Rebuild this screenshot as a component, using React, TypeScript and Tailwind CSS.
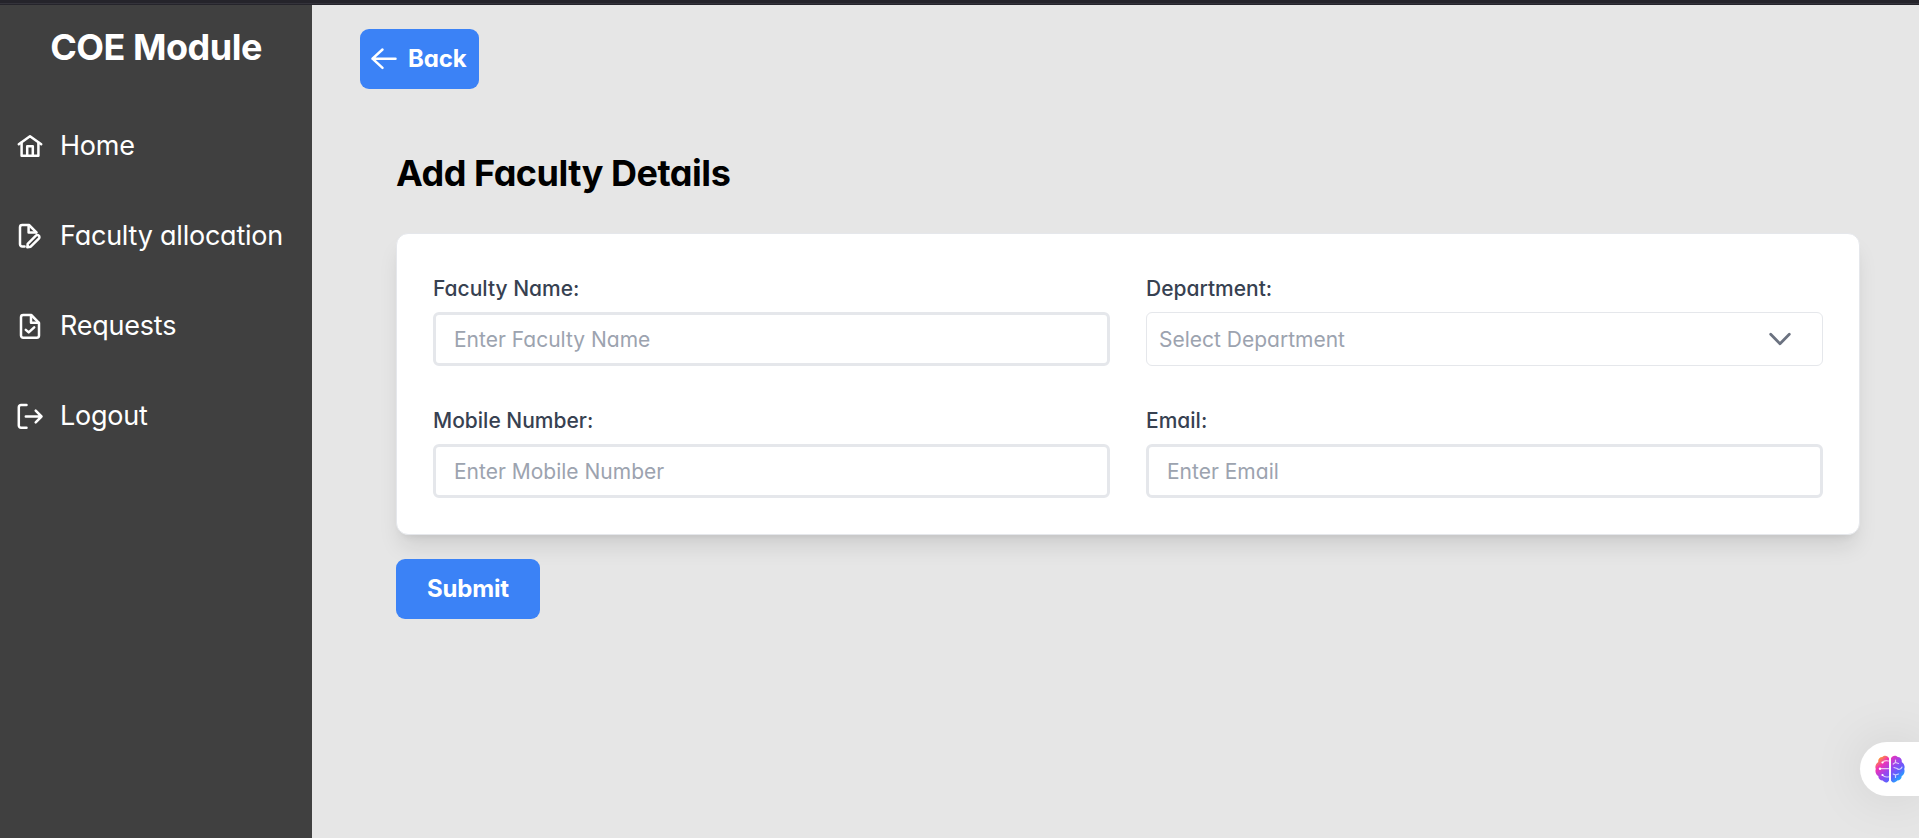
import type { ReactNode } from "react";

function Icon({ children, className = "size-6" }: { children: ReactNode; className?: string }) {
  return (
    <svg
      viewBox="0 0 24 24"
      className={`shrink-0 overflow-visible ${className}`}
      fill="none"
      stroke="currentColor"
      strokeWidth="2.500"
      strokeLinecap="round"
      strokeLinejoin="round"
      aria-hidden="true"
    >
      {children}
    </svg>
  );
}

const menu: { label: string; icon: ReactNode }[] = [
  {
    label: "Home",
    icon: (
      <>
        <path d="M.8 10.3 12 2.2l11.200 8.100" />
        <path d="M3.600 8.800v13h16.800v-13" />
        <path d="M9.200 21.500v-9.200h5.600v9.200" />
      </>
    ),
  },
  {
    label: "Faculty allocation",
    icon: (
      <>
        <path d="M6.600 22.400H4.200a2.200 2.200 0 0 1-2.200-2.200V3.200A2.200 2.200 0 0 1 4.200 1h6.800l7.400 7.400" />
        <path d="M10.600 1.400v7.200h7.600" />
        <path d="m9.300 23.300.4-3.500 8.200-8.100a2 2 0 0 1 2.900 0 2 2 0 0 1 0 2.900l-8.100 8.100z" />
      </>
    ),
  },
  {
    label: "Requests",
    icon: (
      <>
        <path d="M5.200 1h8l7.800 7.800v12.800a2.200 2.200 0 0 1-2.200 2.200H5.200A2.200 2.200 0 0 1 3 21.600V3.200A2.200 2.200 0 0 1 5.200 1z" />
        <path d="M13 1.400v7.300h7.500" />
        <path d="m7.800 15.900 2.900 2.500 5.500-5" />
      </>
    ),
  },
  {
    label: "Logout",
    icon: (
      <>
        <path d="M8.500 1H3a2.200 2.200 0 0 0-2.200 2.200v18.400A2.200 2.200 0 0 0 3 23.800h5.500" />
        <path d="M7.800 12.500h15.700M17.700 6.700l5.800 5.800-5.800 5.800" />
      </>
    ),
  },
];

function Sidebar() {
  return (
    <aside className="flex w-[312px] shrink-0 flex-col bg-[#404040] text-white">
      <h1 className="mt-[18px] text-center text-4xl leading-[48px] font-bold tracking-[-0.5px] whitespace-nowrap">
        COE Module
      </h1>
      <nav className="mt-[30px] flex flex-col">
        {menu.map((item) => (
          <a key={item.label} href="#" className="flex h-[90px] items-center gap-[18px] pl-[18px] text-[27px] tracking-[-0.23px] whitespace-nowrap">
            <Icon>{item.icon}</Icon>
            <span>{item.label}</span>
          </a>
        ))}
      </nav>
    </aside>
  );
}

function Field({ label, children }: { label: string; children: ReactNode }) {
  return (
    <label className="flex flex-col">
      <span className="mb-1.5 h-9 text-[21px] leading-[38px] font-medium text-[#374151]">{label}</span>
      {children}
    </label>
  );
}

function TextInput({ placeholder }: { placeholder: string }) {
  return (
    <input
      placeholder={placeholder}
      className="h-[54px] w-full rounded-md border-[3px] border-[#e5e7eb] bg-white px-[18px] text-[21px] outline-none placeholder:text-[#9ca3af]"
    />
  );
}

function Brain() {
  return (
    <svg viewBox="0 0 30 28" className="h-7 w-[30px]" aria-hidden="true">
      <defs>
        <linearGradient id="brain" x1="5" y1="2" x2="26" y2="25" gradientUnits="userSpaceOnUse">
          <stop offset="0" stopColor="#ff9a2e" />
          <stop offset="0.22" stopColor="#f032b4" />
          <stop offset="0.5" stopColor="#9b45ee" />
          <stop offset="0.75" stopColor="#5a62ff" />
          <stop offset="1" stopColor="#18b4ff" />
        </linearGradient>
      </defs>
      <path
        fill="url(#brain)"
        d="M14 3.200C13 .6 9.300-.4 7.300 2 4.500 2 2.700 4.500 3.300 7 .8 8.500-.3 11.800.8 14c-1 2.700.2 6 2.500 7 0 2.800 2 4.600 4.400 4.600 2 2.600 5.300 2.300 6.300-.2zM16 3.200C17 .6 20.700-.4 22.700 2c2.800 0 4.600 2.500 4 5 2.500 1.500 3.600 4.800 2.500 7 1 2.700-.2 6-2.500 7 0 2.800-2 4.600-4.400 4.600-2 2.600-5.300 2.300-6.300-.2z"
      />
      <g fill="none" stroke="#fff" strokeOpacity="0.7" strokeWidth="1.200" strokeLinecap="round">
        <path d="M5 13.700h9M7.500 7.500c1.500-2 4-2 6-1.500M7.500 20c1.500 2 4 2.200 6 1.800" />
        <path d="M20.500 5v2.500l-2.300 1.500M20.500 7.500l3 1M22 13.500c1.500 1.500 4 1 5-1.500M22 13.500l-3-1M20.500 22.500V20l-2.300-1M20.500 20l3-1" />
      </g>
      <g fill="#fff">
        <circle cx="5" cy="13.700" r="1.200" />
        <circle cx="7.500" cy="7.500" r="1.100" />
        <circle cx="7.500" cy="20" r="1.100" />
      </g>
    </svg>
  );
}

export default function App() {
  return (
    <div className="relative flex h-[838px] flex-col overflow-hidden bg-[#e6e6e6] font-['Inter',sans-serif] [font-feature-settings:'cv11']">
      <div className="h-[5px] shrink-0 bg-[#25242b] pt-[3px]">
        <div className="h-px bg-[#34333b]" />
      </div>
      <div className="flex min-h-0 flex-1">
        <Sidebar />
        <main className="flex flex-1 flex-col items-start pt-6 pl-12">
          <button className="flex h-[60px] w-[119px] items-center gap-3 rounded-[9px] bg-[#3b82f6] pl-3 text-2xl font-bold tracking-[-0.15px] text-white">
            <Icon>
              <path d="M.5 11.700h23M10.500 2.500.5 11.700l10 9.200" />
            </Icon>
            Back
          </button>
          <section className="ml-9 flex w-[1464px] flex-col items-start">
            <h2 className="mt-[60px] text-4xl leading-[48px] font-bold tracking-[-0.48px] whitespace-nowrap text-black">
              Add Faculty Details
            </h2>
            <div className="mt-9 grid h-[302px] w-full grid-cols-2 content-start gap-9 rounded-xl border border-[#e5e7eb] bg-white p-9 shadow-[0_15px_22.5px_-4.5px_rgba(0,0,0,0.1),0_6px_9px_-6px_rgba(0,0,0,0.1)]">
              <Field label="Faculty Name:">
                <TextInput placeholder="Enter Faculty Name" />
              </Field>
              <Field label="Department:">
                <button className="flex h-[54px] w-full items-center justify-between rounded-md border border-[#e5e7eb] bg-white pr-[30px] pl-3 text-[21px] text-[#9ca3af]">
                  <span className="pt-0.5">Select Department</span>
                  <Icon className="size-6 text-[#6b7280]">
                    <path strokeWidth="2.800" d="m2.700 7.300 9.300 9.400 9.300-9.400" />
                  </Icon>
                </button>
              </Field>
              <Field label="Mobile Number:">
                <TextInput placeholder="Enter Mobile Number" />
              </Field>
              <Field label="Email:">
                <TextInput placeholder="Enter Email" />
              </Field>
            </div>
            <button className="mt-6 h-[60px] w-36 rounded-[9px] bg-[#3b82f6] text-2xl font-bold tracking-[-0.2px] text-white">
              Submit
            </button>
          </section>
        </main>
      </div>
      <div className="absolute top-[742px] right-0 flex h-[54px] w-[59px] items-center rounded-l-full bg-white pl-[15px] shadow-[0_0_54px_rgba(0,0,0,0.1)]">
        <Brain />
      </div>
    </div>
  );
}
